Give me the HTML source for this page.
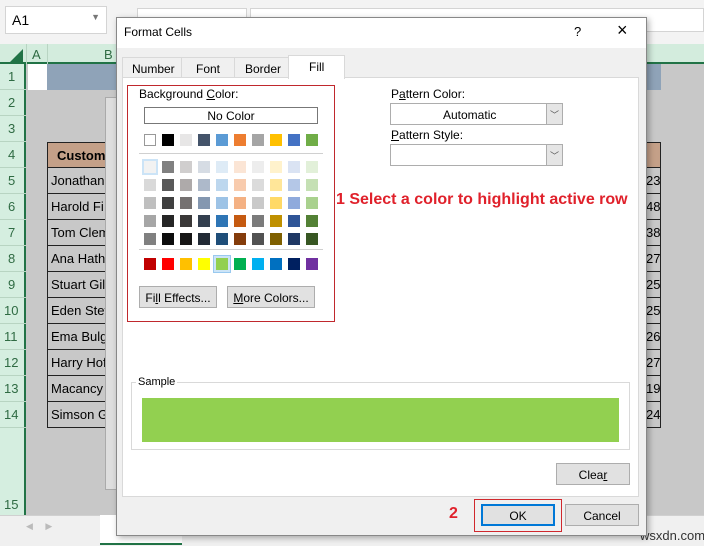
<!DOCTYPE html>
<html><head><meta charset="utf-8"><style>
*{box-sizing:border-box;margin:0;padding:0}
body{width:704px;height:546px;position:relative;overflow:hidden;background:#c8c8c8;font-family:"Liberation Sans","DejaVu Sans",sans-serif;font-size:12px;color:#000}
.a{position:absolute}
.rh{position:absolute;left:0;width:26px;height:26px;border-bottom:1px solid #b8d4c2;text-align:center;font-size:13px;color:#2f6b43;padding-left:8px;text-align:left}
.cell{position:absolute;left:47px;width:70px;height:26px;border:1px solid #222;border-top:none;font-size:13px;padding:5px 0 0 3px;white-space:nowrap;overflow:hidden}
.num{position:absolute;left:646px;width:15px;height:26px;border:1px solid #222;border-top:none;border-left:none;font-size:13px;padding-top:5px;overflow:hidden}
.sw{position:absolute;width:12px;height:12px}
.btn{position:absolute;background:#e1e1e1;border:1px solid #adadad;text-align:center;font-size:12px}
</style></head><body>
<!-- top bar -->
<div class="a" style="left:0;top:0;width:704px;height:44px;background:#f3f3f3"></div>
<div class="a" style="left:5px;top:6px;width:102px;height:28px;background:#fff;border:1px solid #d4d4d4;font-size:14px;padding:5px 0 0 6px">A1<span style="position:absolute;right:6px;top:5px;color:#777;font-size:9px">▼</span></div>
<div class="a" style="left:137px;top:8px;width:110px;height:24px;background:#fff;border:1px solid #d4d4d4"></div>
<div class="a" style="left:250px;top:8px;width:454px;height:24px;background:#fff;border:1px solid #d4d4d4"></div>
<!-- col header -->
<div class="a" style="left:0;top:44px;width:704px;height:20px;background:#d3ecdd;border-bottom:2px solid #217346"></div>
<div class="a" style="left:10px;top:49px;width:0;height:0;border-left:13px solid transparent;border-bottom:13px solid #217346"></div>
<div class="a" style="left:26px;top:44px;width:1px;height:20px;background:#b8d4c2"></div>
<div class="a" style="left:32px;top:47px;font-size:13px;color:#2f6b43">A</div>
<div class="a" style="left:47px;top:44px;width:1px;height:20px;background:#b8d4c2"></div>
<div class="a" style="left:104px;top:47px;font-size:13px;color:#2f6b43">B</div>
<!-- row header -->
<div class="a" style="left:0;top:64px;width:26px;height:451px;background:#d5eee0;border-right:2px solid #217346"></div>
<div class="rh" style="top:64px;padding-top:5px">1</div>
<div class="rh" style="top:90px;padding-top:5px">2</div>
<div class="rh" style="top:116px;padding-top:5px">3</div>
<div class="rh" style="top:142px;padding-top:5px">4</div>
<div class="rh" style="top:168px;padding-top:5px">5</div>
<div class="rh" style="top:194px;padding-top:5px">6</div>
<div class="rh" style="top:220px;padding-top:5px">7</div>
<div class="rh" style="top:246px;padding-top:5px">8</div>
<div class="rh" style="top:272px;padding-top:5px">9</div>
<div class="rh" style="top:298px;padding-top:5px;padding-left:4px">10</div>
<div class="rh" style="top:324px;padding-top:5px;padding-left:4px">11</div>
<div class="rh" style="top:350px;padding-top:5px;padding-left:4px">12</div>
<div class="rh" style="top:376px;padding-top:5px;padding-left:4px">13</div>
<div class="rh" style="top:402px;padding-top:5px;padding-left:4px">14</div>
<div class="a" style="left:4px;top:497px;font-size:13px;color:#2f6b43">15</div>
<!-- sheet -->
<div class="a" style="left:28px;top:64px;width:19px;height:26px;background:#fff"></div>
<div class="a" style="left:47px;top:64px;width:614px;height:26px;background:#8fa3b8"></div>
<div class="a" style="left:47px;top:142px;width:70px;height:26px;background:#c4a088;border:1px solid #222;font-weight:bold;font-size:13px;padding:5px 0 0 9px;overflow:hidden">Customer</div>
<div class="a" style="left:646px;top:142px;width:15px;height:26px;background:#c4a088;border:1px solid #222;border-left:none"></div>
<div class="cell" style="top:168px">Jonathan</div><div class="num" style="top:168px">23</div>
<div class="cell" style="top:194px">Harold Fi</div><div class="num" style="top:194px">48</div>
<div class="cell" style="top:220px">Tom Clem</div><div class="num" style="top:220px">38</div>
<div class="cell" style="top:246px">Ana Hath</div><div class="num" style="top:246px">27</div>
<div class="cell" style="top:272px">Stuart Gil</div><div class="num" style="top:272px">25</div>
<div class="cell" style="top:298px">Eden Stev</div><div class="num" style="top:298px">25</div>
<div class="cell" style="top:324px">Ema Bulg</div><div class="num" style="top:324px">26</div>
<div class="cell" style="top:350px">Harry Hof</div><div class="num" style="top:350px">27</div>
<div class="cell" style="top:376px">Macancy</div><div class="num" style="top:376px">19</div>
<div class="cell" style="top:402px">Simson G</div><div class="num" style="top:402px">24</div>
<div class="a" style="left:105px;top:97px;width:12px;height:393px;background:#dedede;border:1px solid #aaa"></div>
<!-- bottom bar -->
<div class="a" style="left:0;top:515px;width:704px;height:31px;background:#f0f0f0;border-top:1px solid #d0d0d0"></div>
<div class="a" style="left:26px;top:521px;color:#bbb;font-size:9px">◀&nbsp;&nbsp;&nbsp;&nbsp;&nbsp;▶</div>
<div class="a" style="left:100px;top:515px;width:82px;height:30px;background:#fff;border-bottom:2px solid #217346"></div>
<div class="a" style="left:640px;top:528px;font-size:13px;color:#333">wsxdn.com</div>
<!-- dialog -->
<div class="a" style="left:116px;top:17px;width:531px;height:519px;background:#f0f0f0;border:1px solid #888;box-shadow:2px 2px 6px rgba(0,0,0,.3)"></div>
<div class="a" style="left:117px;top:18px;width:529px;height:30px;background:#fff"></div>
<div class="a" style="left:124px;top:25px;font-size:12px">Format Cells</div>
<div class="a" style="left:574px;top:24px;font-size:13px">?</div>
<div class="a" style="left:617px;top:20px;font-size:18px;font-weight:300">×</div>
<!-- tabs -->
<div class="a" style="left:122px;top:57px;width:60px;height:21px;border:1px solid #d9d9d9;background:#f0f0f0;padding:4px 0 0 9px">Number</div>
<div class="a" style="left:181px;top:57px;width:54px;height:21px;border:1px solid #d9d9d9;background:#f0f0f0;padding:4px 0 0 14px">Font</div>
<div class="a" style="left:234px;top:57px;width:55px;height:21px;border:1px solid #d9d9d9;background:#f0f0f0;padding:4px 0 0 10px">Border</div>
<div class="a" style="left:288px;top:55px;width:57px;height:24px;border:1px solid #d9d9d9;border-bottom:none;background:#fff;padding:4px 0 0 20px;z-index:2">Fill</div>
<div class="a" style="left:122px;top:77px;width:517px;height:420px;background:#fff;border:1px solid #d9d9d9"></div>
<!-- background color box -->
<div class="a" style="left:127px;top:85px;width:208px;height:237px;border:1px solid #c0282d"></div>
<div class="a" style="left:139px;top:87px">Background <u>C</u>olor:</div>
<div class="a" style="left:144px;top:107px;width:174px;height:17px;border:1px solid #777;text-align:center;padding-top:1px">No Color</div>
<div class="a" style="left:139px;top:153px;width:184px;height:1px;background:#d0d0d0"></div>
<div class="a" style="left:139px;top:249px;width:184px;height:1px;background:#d0d0d0"></div>
<!-- theme row -->
<div class="sw" style="left:144px;top:134px;background:#fff;border:1px solid #999"></div>
<div class="sw" style="left:162px;top:134px;background:#000"></div>
<div class="sw" style="left:180px;top:134px;background:#e7e6e6"></div>
<div class="sw" style="left:198px;top:134px;background:#44546a"></div>
<div class="sw" style="left:216px;top:134px;background:#5b9bd5"></div>
<div class="sw" style="left:234px;top:134px;background:#ed7d31"></div>
<div class="sw" style="left:252px;top:134px;background:#a5a5a5"></div>
<div class="sw" style="left:270px;top:134px;background:#ffc000"></div>
<div class="sw" style="left:288px;top:134px;background:#4472c4"></div>
<div class="sw" style="left:306px;top:134px;background:#70ad47"></div>
<!-- tints -->
<div class="sw" style="left:144px;top:161px;background:#f2f2f2;outline:2px solid #cce4f7"></div>
<div class="sw" style="left:162px;top:161px;background:#808080"></div>
<div class="sw" style="left:180px;top:161px;background:#d0cece"></div>
<div class="sw" style="left:198px;top:161px;background:#d6dce4"></div>
<div class="sw" style="left:216px;top:161px;background:#deebf6"></div>
<div class="sw" style="left:234px;top:161px;background:#fbe5d5"></div>
<div class="sw" style="left:252px;top:161px;background:#ededed"></div>
<div class="sw" style="left:270px;top:161px;background:#fff2cc"></div>
<div class="sw" style="left:288px;top:161px;background:#dae3f3"></div>
<div class="sw" style="left:306px;top:161px;background:#e2f0d9"></div>

<div class="sw" style="left:144px;top:179px;background:#d9d9d9"></div>
<div class="sw" style="left:162px;top:179px;background:#595959"></div>
<div class="sw" style="left:180px;top:179px;background:#aeaaaa"></div>
<div class="sw" style="left:198px;top:179px;background:#adb9ca"></div>
<div class="sw" style="left:216px;top:179px;background:#bdd7ee"></div>
<div class="sw" style="left:234px;top:179px;background:#f8cbad"></div>
<div class="sw" style="left:252px;top:179px;background:#dbdbdb"></div>
<div class="sw" style="left:270px;top:179px;background:#ffe699"></div>
<div class="sw" style="left:288px;top:179px;background:#b4c7e7"></div>
<div class="sw" style="left:306px;top:179px;background:#c5e0b4"></div>

<div class="sw" style="left:144px;top:197px;background:#bfbfbf"></div>
<div class="sw" style="left:162px;top:197px;background:#404040"></div>
<div class="sw" style="left:180px;top:197px;background:#757171"></div>
<div class="sw" style="left:198px;top:197px;background:#8497b0"></div>
<div class="sw" style="left:216px;top:197px;background:#9dc3e6"></div>
<div class="sw" style="left:234px;top:197px;background:#f4b183"></div>
<div class="sw" style="left:252px;top:197px;background:#c9c9c9"></div>
<div class="sw" style="left:270px;top:197px;background:#ffd966"></div>
<div class="sw" style="left:288px;top:197px;background:#8faadc"></div>
<div class="sw" style="left:306px;top:197px;background:#a9d18e"></div>

<div class="sw" style="left:144px;top:215px;background:#a6a6a6"></div>
<div class="sw" style="left:162px;top:215px;background:#262626"></div>
<div class="sw" style="left:180px;top:215px;background:#3a3838"></div>
<div class="sw" style="left:198px;top:215px;background:#333f4f"></div>
<div class="sw" style="left:216px;top:215px;background:#2e75b5"></div>
<div class="sw" style="left:234px;top:215px;background:#c55a11"></div>
<div class="sw" style="left:252px;top:215px;background:#7b7b7b"></div>
<div class="sw" style="left:270px;top:215px;background:#bf9000"></div>
<div class="sw" style="left:288px;top:215px;background:#2f5597"></div>
<div class="sw" style="left:306px;top:215px;background:#538135"></div>

<div class="sw" style="left:144px;top:233px;background:#808080"></div>
<div class="sw" style="left:162px;top:233px;background:#0d0d0d"></div>
<div class="sw" style="left:180px;top:233px;background:#171616"></div>
<div class="sw" style="left:198px;top:233px;background:#222a35"></div>
<div class="sw" style="left:216px;top:233px;background:#1f4e79"></div>
<div class="sw" style="left:234px;top:233px;background:#843c0b"></div>
<div class="sw" style="left:252px;top:233px;background:#525252"></div>
<div class="sw" style="left:270px;top:233px;background:#7f6000"></div>
<div class="sw" style="left:288px;top:233px;background:#1f3864"></div>
<div class="sw" style="left:306px;top:233px;background:#385723"></div>
<!-- standard -->
<div class="sw" style="left:144px;top:258px;background:#c00000"></div>
<div class="sw" style="left:162px;top:258px;background:#ff0000"></div>
<div class="sw" style="left:180px;top:258px;background:#ffc000"></div>
<div class="sw" style="left:198px;top:258px;background:#ffff00"></div>
<div class="a" style="left:213px;top:255px;width:18px;height:18px;background:#cce4f7;border:1px solid #99c9ef"></div>
<div class="sw" style="left:216px;top:258px;background:#92d050"></div>
<div class="sw" style="left:234px;top:258px;background:#00b050"></div>
<div class="sw" style="left:252px;top:258px;background:#00b0f0"></div>
<div class="sw" style="left:270px;top:258px;background:#0070c0"></div>
<div class="sw" style="left:288px;top:258px;background:#002060"></div>
<div class="sw" style="left:306px;top:258px;background:#7030a0"></div>
<div class="btn" style="left:139px;top:286px;width:78px;height:22px;padding-top:4px">Fi<u>l</u>l Effects...</div>
<div class="btn" style="left:227px;top:286px;width:88px;height:22px;padding-top:4px"><u>M</u>ore Colors...</div>
<!-- pattern -->
<div class="a" style="left:391px;top:87px">P<u>a</u>ttern Color:</div>
<div class="a" style="left:390px;top:103px;width:173px;height:22px;border:1px solid #adadad;background:#fff;padding:4px 0 0 52px">Automatic</div>
<div class="a" style="left:546px;top:104px;width:16px;height:20px;background:#e5e5e5;border-left:1px solid #adadad;color:#555;font-size:9px;text-align:center;padding-top:4px">﹀</div>
<div class="a" style="left:391px;top:128px"><u>P</u>attern Style:</div>
<div class="a" style="left:390px;top:144px;width:173px;height:22px;border:1px solid #adadad;background:#fff"></div>
<div class="a" style="left:546px;top:145px;width:16px;height:20px;background:#e5e5e5;border-left:1px solid #adadad;color:#555;font-size:9px;text-align:center;padding-top:4px">﹀</div>
<div class="a" style="left:336px;top:191px;font-size:16px;font-weight:bold;color:#e0212b;white-space:nowrap">1 Select a color to highlight active row</div>
<!-- sample -->
<div class="a" style="left:131px;top:382px;width:499px;height:68px;border:1px solid #d9d9d9"></div>
<div class="a" style="left:136px;top:376px;background:#fff;padding:0 2px;font-size:11px">Sample</div>
<div class="a" style="left:142px;top:398px;width:477px;height:44px;background:#92d050"></div>
<div class="btn" style="left:556px;top:463px;width:54px;height:22px;padding-top:4px;left:556px;width:74px">Clea<u>r</u></div>
<!-- footer -->
<div class="a" style="left:449px;top:505px;font-size:16px;font-weight:bold;color:#e0212b">2</div>
<div class="a" style="left:474px;top:499px;width:88px;height:33px;border:1px solid #d0282d"></div>
<div class="btn" style="left:481px;top:504px;width:74px;height:22px;border:2px solid #0078d7;padding-top:3px">OK</div>
<div class="btn" style="left:565px;top:504px;width:74px;height:22px;padding-top:4px">Cancel</div>
</body></html>
